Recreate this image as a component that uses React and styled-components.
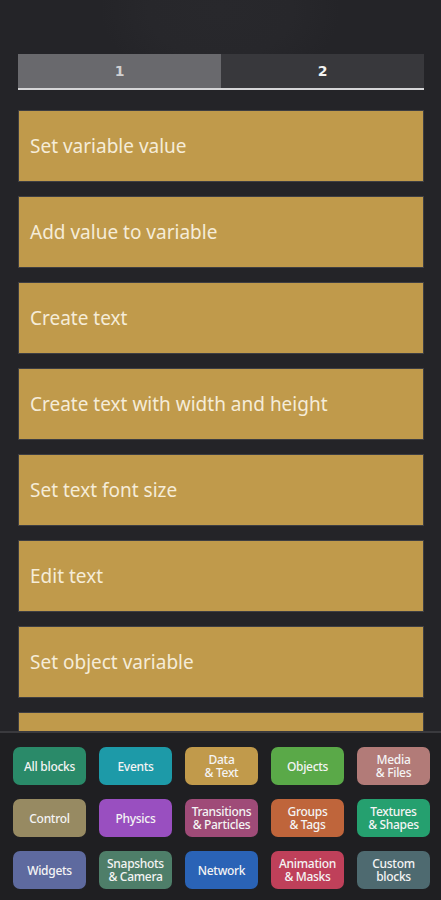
import React from 'react'
import styled, { createGlobalStyle } from 'styled-components'

const GlobalStyle = createGlobalStyle`
  html, body {
    margin: 0;
    padding: 0;
    background: #242428;
    font-family: "Noto Sans", "Open Sans", sans-serif;
  }
`

const blocks = [
  'Set variable value',
  'Add value to variable',
  'Create text',
  'Create text with width and height',
  'Set text font size',
  'Edit text',
  'Set object variable',
  ''
]

const categories = [
  { label: 'All blocks', color: '#2a8a69' },
  { label: 'Events', color: '#1d9aa8' },
  { label: 'Data\n& Text', color: '#c19a4b' },
  { label: 'Objects', color: '#5aa948' },
  { label: 'Media\n& Files', color: '#b27b78' },
  { label: 'Control', color: '#978a62' },
  { label: 'Physics', color: '#994fc0' },
  { label: 'Transitions\n& Particles', color: '#9f4b78' },
  { label: 'Groups\n& Tags', color: '#bf653b' },
  { label: 'Textures\n& Shapes', color: '#25a06f' },
  { label: 'Widgets', color: '#5e6a9f' },
  { label: 'Snapshots\n& Camera', color: '#4e7e69' },
  { label: 'Network', color: '#2a63b6' },
  { label: 'Animation\n& Masks', color: '#bf405a' },
  { label: 'Custom\nblocks', color: '#4e6a70' }
]

const Screen = styled.div`
  height: 100vh;
  display: flex;
  flex-direction: column;
  overflow: hidden;
  background: radial-gradient(ellipse 120px 80px at 50% 10px, #28282c 0, #27272b 60%, transparent 100%), #242428;
`

const Content = styled.div`
  flex: 1;
  overflow: hidden;
  padding: 54px 17px 0 18px;
`

const Tabs = styled.div`
  display: flex;
  border-bottom: 2px solid #d6d6d8;
  margin-bottom: 21px;
`

const Tab = styled.div`
  flex: 1;
  height: 34px;
  display: flex;
  align-items: center;
  justify-content: center;
  background: ${p => (p.$active ? '#69696d' : '#38383c')};
  color: ${p => (p.$active ? '#d0d0d2' : '#f2f2f2')};
  font-family: "DejaVu Sans", sans-serif;
  font-weight: bold;
  font-size: 14px;
`

const BlockList = styled.div`
  display: flex;
  flex-direction: column;
  gap: 16px;
  padding: 0 1px;
`

const Block = styled.div`
  height: 70px;
  flex-shrink: 0;
  background: #c09a4b;
  box-shadow: 0 0 0 1px rgba(255, 255, 255, 0.12);
  display: flex;
  align-items: center;
  padding-left: 11px;
  color: #f5ecd8;
  font-size: 19px;
`

const Palette = styled.div`
  height: 169px;
  flex-shrink: 0;
  border-top: 2px solid #3a3a3e;
  background: #1f1f22;
  display: grid;
  grid-template-columns: repeat(5, 1fr);
  grid-auto-rows: 38px;
  column-gap: 13px;
  row-gap: 14px;
  padding: 14px 11px 0 13px;
  box-sizing: border-box;
`

const CategoryButton = styled.div`
  background: ${p => p.$color};
  border-radius: 7px;
  display: flex;
  align-items: center;
  justify-content: center;
  text-align: center;
  white-space: pre-line;
  color: #f4f4f4;
  font-size: 12px;
  font-weight: 500;
  line-height: 13px;
  letter-spacing: -0.3px;
`

export default function App() {
  return (
    <>
      <GlobalStyle />
      <Screen>
        <Content>
          <Tabs>
            <Tab $active>1</Tab>
            <Tab>2</Tab>
          </Tabs>
          <BlockList>
            {blocks.map((b, i) => (
              <Block key={i}>{b}</Block>
            ))}
          </BlockList>
        </Content>
        <Palette>
          {categories.map(c => (
            <CategoryButton key={c.label} $color={c.color}>
              {c.label}
            </CategoryButton>
          ))}
        </Palette>
      </Screen>
    </>
  )
}
